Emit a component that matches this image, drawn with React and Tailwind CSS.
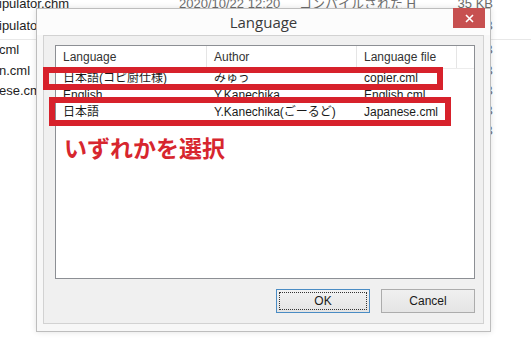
import React from "react";

const bgFont = { fontFamily: '"Liberation Sans", "Noto Sans CJK JP", sans-serif' };

function BgRow({ name, date, type, size, h }) {
  return (
    <div className={`relative flex items-center whitespace-nowrap text-[13px] text-[#1e1e1e] ${h}`}>
      <span className="w-[180px] -ml-[1px]">{name}</span>
      <span className="w-[120px] text-[#6d6d6d]">{date}</span>
      <span className="w-[150px] text-[#6d6d6d]">{type}</span>
      <span className="w-[44px] text-right text-[#6d6d6d]">{size}</span>
    </div>
  );
}

function Header({ w, children, last }) {
  return (
    <div
      className={`${w} h-full flex items-center pl-[7px] ${last ? "" : "border-r border-[#e5e5e5]"}`}
    >
      {children}
    </div>
  );
}

function Row({ a, b, c }) {
  return (
    <div className="flex h-[17px] items-center whitespace-nowrap">
      <div className="w-[151px] pl-[7px]">{a}</div>
      <div className="w-[150px] pl-[7px]">{b}</div>
      <div className="w-[100px] pl-[7px]">{c}</div>
    </div>
  );
}

export default function App() {
  return (
    <div className="relative w-[531px] h-[344px] overflow-hidden bg-white" style={bgFont}>
      {/* background explorer list */}
      <div className="-mt-[7px]">
        <BgRow name="ipulator.chm" date="2020/10/22 12:20" type="コンパイルされた H" size="35 KB" h="h-[22px]" />
        <BgRow name="ipulator.chm" date="2020/10/22 12:20" type="CML ファイル" size="3 KB" h="h-[21px]" />
        <div className="h-[4px] border-b border-[#e8e8e8]" />
        <BgRow name="cml" date="2020/10/22 12:20" type="CML ファイル" size="3 KB" h="h-[20px]" />
        <BgRow name="n.cml" date="2020/10/22 12:20" type="CML ファイル" size="3 KB" h="h-[21px]" />
        <BgRow name="ese.cml" date="2020/10/22 12:20" type="CML ファイル" size="3 KB" h="h-[20px]" />
        <BgRow name="" date="" type="" size="3 KB" h="h-[20px]" />
        <BgRow name="" date="" type="" size="3 KB" h="h-[20px]" />
      </div>

      {/* dialog window */}
      <div className="absolute left-[36px] top-[8px] w-[455px] h-[324px] border border-[#bdbdbd] bg-[#f7f7f7] shadow-[0_0_6px_rgba(0,0,0,0.12)] flex flex-col">
        <div className="h-[27px] flex items-center justify-center bg-[#fcfcfc]">
          <span
            className="text-[15px] text-[#3a3a3a] mt-[1px]"
            style={{ fontFamily: '"Open Sans", "Noto Sans", sans-serif' }}
          >
            Language
          </span>
        </div>
        <div className="absolute -top-[1px] right-[5px] w-[32px] h-[20px] bg-[#c75050] flex items-center justify-center">
          <svg width="9" height="9" viewBox="0 0 9 9">
            <path d="M1 1 L8 8 M8 1 L1 8" stroke="white" strokeWidth="1.6" />
          </svg>
        </div>

        <div className="flex-1 mx-[6px] mb-[7px] border border-[#d2d2d2] bg-[#f0f0f0] flex flex-col pt-[9px] pl-[11px] pr-[8px] pb-[10px]">
          {/* list view */}
          <div className="relative h-[234px] border border-[#8c8f94] bg-white text-[12px] text-[#1a1a1a]">
            <div className="flex h-[23px] border-b border-[#ececec] text-[#333]">
              <Header w="w-[151px]">Language</Header>
              <Header w="w-[150px]">Author</Header>
              <Header w="w-[100px]">Language file</Header>
              <Header w="flex-1" last />
            </div>
            <Row a="日本語(コピ厨仕様)" b="みゅう" c="copier.cml" />
            <Row a="English" b="Y.Kanechika" c="English.cml" />
            <Row a="日本語" b="Y.Kanechika(ごーるど)" c="Japanese.cml" />
          </div>

          {/* buttons */}
          <div className="mt-[10px] flex justify-end gap-[11px] text-[12px] text-[#1a1a1a]">
            <div className="w-[94px] h-[24px] border border-[#4a8cc4] bg-gradient-to-b from-[#f2f2f2] to-[#e4e4e4] p-[2px]">
              <div className="w-full h-full border border-dotted border-[#333] flex items-center justify-center">
                OK
              </div>
            </div>
            <div className="w-[94px] h-[24px] border border-[#acacac] bg-gradient-to-b from-[#f0f0f0] to-[#e5e5e5] flex items-center justify-center">
              Cancel
            </div>
          </div>
        </div>
      </div>

      {/* red annotation boxes */}
      <div className="absolute left-[43px] top-[67px] w-[400px] h-[23px] border-[6px] border-[#d7212b]" />
      <div className="absolute left-[49px] top-[97px] w-[402px] h-[29px] border-[6px] border-[#d7212b]" />

      <div
        className="absolute left-[64px] top-[136px] text-[23px] font-bold text-[#d7262e] leading-none"
        style={{ fontFamily: '"Noto Sans CJK JP", sans-serif' }}
      >
        いずれかを選択
      </div>
    </div>
  );
}
